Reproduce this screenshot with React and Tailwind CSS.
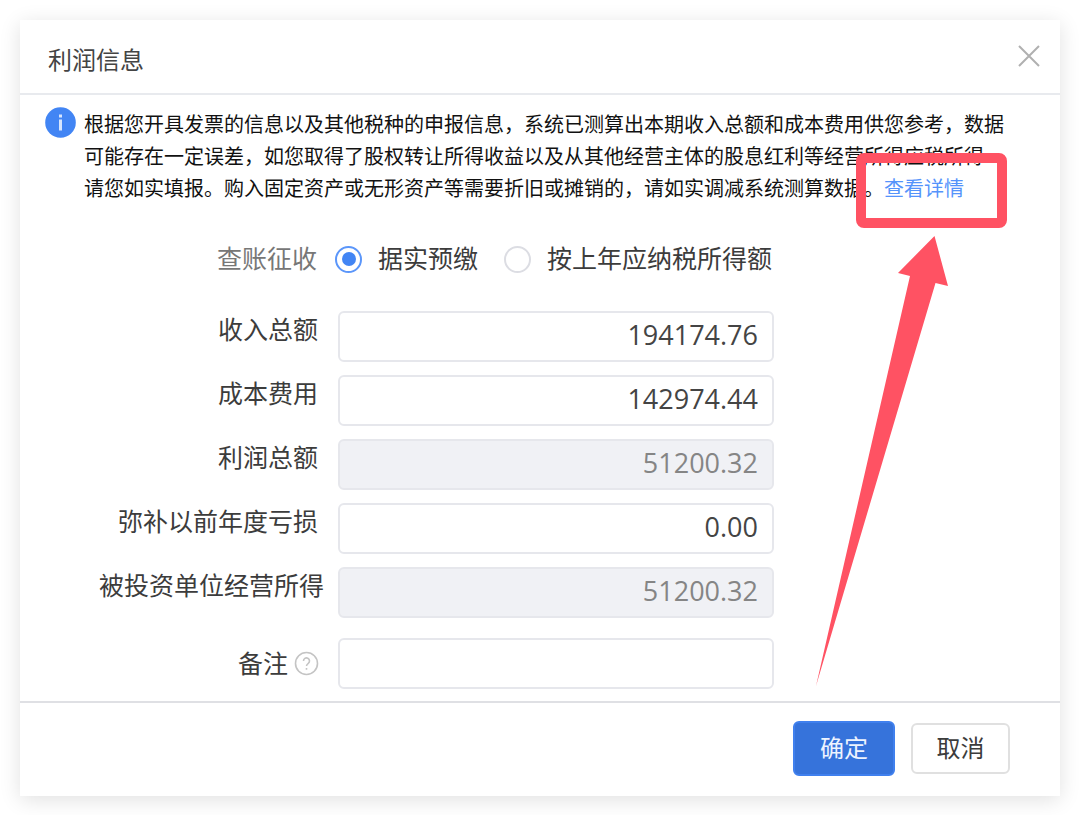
import React, { useState } from 'react';

const fields = [
  { id: 'income', label: '收入总额', value: '194174.76' },
  { id: 'cost', label: '成本费用', value: '142974.44' },
  { id: 'profit', label: '利润总额', value: '51200.32', disabled: true },
  { id: 'loss', label: '弥补以前年度亏损', value: '0.00' },
  { id: 'invested', label: '被投资单位经营所得', value: '51200.32', disabled: true, wide: true },
];

function Field({ id, label, value, disabled, wide }) {
  return (
    <div className="flex">
      <label
        htmlFor={id}
        className={`w-[318px] shrink-0 whitespace-nowrap text-right text-[25px] leading-[38px] ${wide ? 'pr-3.5' : 'pr-5'}`}
      >
        {label}
      </label>
      <input
        id={id}
        type="text"
        defaultValue={value}
        disabled={disabled}
        className="h-[51px] min-w-0 flex-1 rounded-md border-2 border-[#e6e7ec] bg-white px-3.5 pb-1 text-right
          font-['Open_Sans',sans-serif] text-[27px] text-[#444] disabled:bg-[#f0f1f5] disabled:text-[#858585]"
      />
    </div>
  );
}

function Option({ label, value, current, onChange }) {
  return (
    <label className="flex items-center gap-4 whitespace-nowrap">
      <input
        type="radio"
        name="method"
        value={value}
        checked={current === value}
        onChange={() => onChange(value)}
        className="grid size-[27px] appearance-none place-items-center rounded-full border-2 border-[#dcdde3] bg-white
          checked:border-[#5b96fa] checked:before:size-3.5 checked:before:rounded-full
          checked:before:bg-[#4285f4] checked:before:content-['']"
      />
      {label}
    </label>
  );
}

export default function App() {
  const [method, setMethod] = useState('actual');

  return (
    <div className="flow-root bg-white font-['Liberation_Sans','Noto_Sans_CJK_SC',sans-serif] text-[#3c3c3c]">
      <div role="dialog" aria-labelledby="title" className="relative m-5 bg-white shadow-[0_4px_20px_rgba(0,0,0,0.12)]">
        {/* Header */}
        <div className="flex items-start justify-between border-b-2 border-[#e8eaee] pb-3 pl-7 pr-5 pt-[21px]">
          <h1 id="title" className="text-2xl leading-10 text-[#444]">利润信息</h1>
          <button type="button" aria-label="关闭">
            <svg width="24" height="32" viewBox="0 0 24 32" fill="none" stroke="#b0b0b0" strokeWidth="2">
              <path d="M3 5l20 20M23 5L3 25" />
            </svg>
          </button>
        </div>

        {/* Notice */}
        <div className="flex gap-2 pl-[25px] pr-10 pt-3">
          <svg width="31" height="31" viewBox="0 0 31 31" className="shrink-0">
            <circle cx="15.5" cy="15.5" r="15.3" fill="#4285f4" />
            <path d="M15.5 7.5v3M15.5 12.5v11" stroke="#d8e6fd" strokeWidth="3" />
          </svg>
          <p className="mt-0.5 whitespace-nowrap text-xl leading-8 text-[#111]">
            根据您开具发票的信息以及其他税种的申报信息，系统已测算出本期收入总额和成本费用供您参考，数据
            <br />
            可能存在一定误差，如您取得了股权转让所得收益以及从其他经营主体的股息红利等经营所得应税所得
            <br />
            请您如实填报。购入固定资产或无形资产等需要折旧或摊销的，请如实调减系统测算数据。
            <a href="#detail" className="text-[#5593fb]">查看详情</a>
          </p>
        </div>

        <form className="pb-3 pr-[286px] pt-[34px]">
          <fieldset className="flex items-center text-[25px] leading-10">
            <legend className="float-left w-[315px] pr-[18px] text-right text-[#777]">查账征收</legend>
            <div className="flex gap-[26px]">
              <Option label="据实预缴" value="actual" current={method} onChange={setMethod} />
              <Option label="按上年应纳税所得额" value="lastYear" current={method} onChange={setMethod} />
            </div>
          </fieldset>

          <div className="mt-8 flex flex-col gap-[13px]">
            {fields.map((field) => (
              <Field key={field.id} {...field} />
            ))}
          </div>

          <div className="mt-5 flex items-center">
            <div className="flex w-[318px] shrink-0 items-center justify-end gap-1.5 pr-[19px]">
              <label htmlFor="remark" className="text-[25px] leading-10">备注</label>
              <svg width="25" height="25" viewBox="0 0 25 25" fill="none" stroke="#c4c4c4" strokeWidth="1.6">
                <circle cx="12.5" cy="12.5" r="11" />
                <path d="M9.5 10a3 3 0 1 1 4.8 2.3c-1.2.9-1.8 1.4-1.8 2.7M12.5 17v1.8" />
              </svg>
            </div>
            <input
              id="remark"
              type="text"
              className="h-[51px] min-w-0 flex-1 rounded-md border-2 border-[#e6e7ec] bg-white px-3.5 text-[25px]"
            />
          </div>
        </form>

        {/* Footer */}
        <div className="flex items-center justify-end gap-4 border-t-2 border-[#dfe0e4] pb-5 pl-5 pr-[50px] pt-[18px] text-2xl">
          <button type="button" className="h-[55px] w-[102px] rounded-md border-2 border-[#4080ee] bg-[#3673db] text-[#eef4ff]">
            确定
          </button>
          <button type="button" className="h-[51px] w-[99px] rounded-md border-2 border-[#e0e0e0] bg-white">
            取消
          </button>
        </div>

        {/* Highlight box and arrow over the detail link */}
        <div className="pointer-events-none absolute right-[53px] top-[133px] h-[75px] w-[151px] rounded-lg border-10 border-[#ff5263]" />
        <svg
          width="134"
          height="452"
          viewBox="0 0 134 452"
          className="pointer-events-none absolute right-[111px] top-[215px]"
          fill="#ff5263"
        >
          <path d="M119.5 1L133 51L120.5 48L1 451L95 41L83 38Z" />
        </svg>
      </div>
    </div>
  );
}
